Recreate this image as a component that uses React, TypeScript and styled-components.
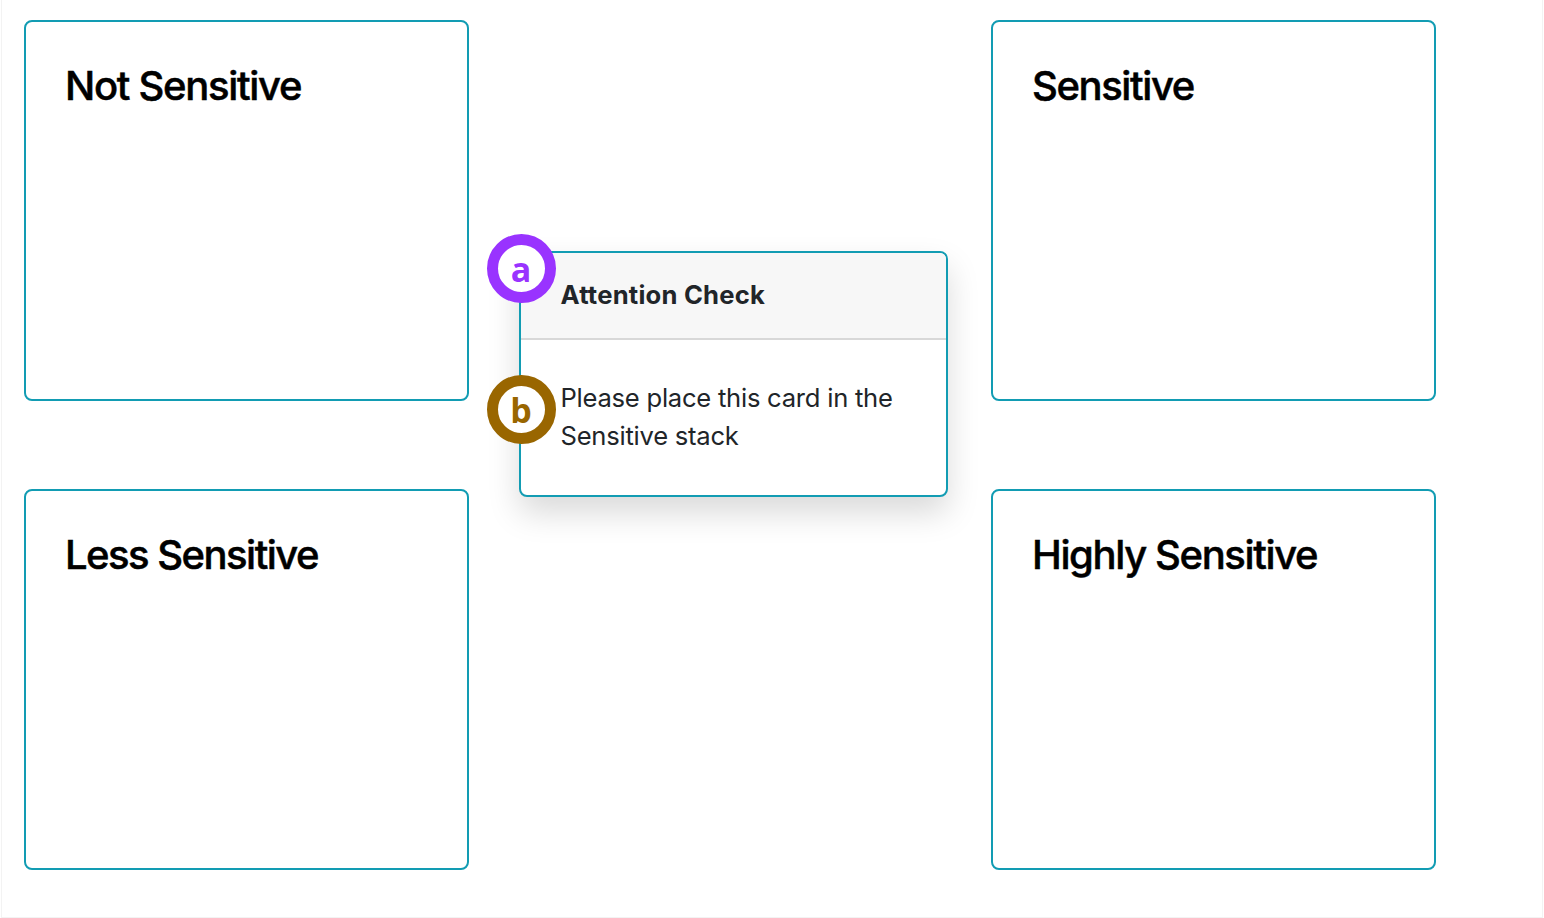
import React from "react";
import styled, { createGlobalStyle } from "styled-components";

const Global = createGlobalStyle`
  * { box-sizing: border-box; }
  body { margin: 0; background: #fff; font-family: Inter, "Liberation Sans", sans-serif; }
  h2, h3, p { margin: 0; }
`;

const Board = styled.main`
  width: 1542px;
  height: 918px;
  margin: 0 1px;
  padding: 20px 106px 47px 22px;
  border: 1px solid #f3f3f3;
  border-top: 0;
  display: flex;
  justify-content: space-between;
  align-items: flex-start;
`;

const Column = styled.div`
  display: flex;
  flex-direction: column;
  gap: 88px;
  width: 445px;
`;

const Stack = styled.section`
  height: 381px;
  border: 2px solid #129cb3;
  border-radius: 8px;
  padding: 39.5px 39px;
`;

const StackTitle = styled.h2<{ $tracking: number }>`
  color: #000;
  font-size: 40px;
  font-weight: 500;
  line-height: 48px;
  letter-spacing: ${(p) => p.$tracking}px;
  -webkit-text-stroke: 0.5px #000;
  white-space: nowrap;
`;

const Card = styled.article`
  position: relative;
  width: 429px;
  height: 246px;
  margin: 231px 5.5px 0 12.5px;
  border: 2px solid #129cb3;
  border-radius: 8px;
  background: #fff;
  box-shadow: 0 16px 32px rgba(0, 0, 0, 0.15);
`;

const CardHeader = styled.h3`
  padding: 23px 39.5px 24px;
  border-bottom: 2px solid #d8d8d8;
  border-radius: 6px 6px 0 0;
  background: #f7f7f7;
  color: #212529;
  font-size: 25.6px;
  font-weight: 700;
  line-height: 38px;
  letter-spacing: 0.22px;
  white-space: nowrap;
`;

const CardText = styled.p`
  padding: 39px 39.5px 40px;
  color: #212529;
  font-size: 25.6px;
  line-height: 38px;
  letter-spacing: -0.25px;
  white-space: nowrap;
`;

const Marker = styled.span<{ $color: string; $top: number }>`
  position: absolute;
  left: -34.5px;
  top: ${(p) => p.$top}px;
  width: 69px;
  height: 69px;
  border: 11.5px solid ${(p) => p.$color};
  border-radius: 50%;
  background: #fff;
  color: ${(p) => p.$color};
  display: flex;
  align-items: center;
  justify-content: center;
  font: 700 34px/1 "Open Sans", sans-serif;
`;

const columns = [
  [
    { title: "Not Sensitive", tracking: -1.3 },
    { title: "Less Sensitive", tracking: -1.52 },
  ],
  [
    { title: "Sensitive", tracking: -1.4 },
    { title: "Highly Sensitive", tracking: -1.38 },
  ],
];

const StackColumn = ({ stacks }: { stacks: { title: string; tracking: number }[] }) => (
  <Column>
    {stacks.map((s) => (
      <Stack key={s.title}>
        <StackTitle $tracking={s.tracking}>{s.title}</StackTitle>
      </Stack>
    ))}
  </Column>
);

export default function App() {
  return (
    <>
      <Global />
      <Board>
        <StackColumn stacks={columns[0]} />
        <Card>
          <CardHeader>Attention Check</CardHeader>
          <CardText>
            Please place this card in the
            <br />
            Sensitive stack
          </CardText>
          <Marker $color="#9933ff" $top={-19}>a</Marker>
          <Marker $color="#996600" $top={122}>b</Marker>
        </Card>
        <StackColumn stacks={columns[1]} />
      </Board>
    </>
  );
}
